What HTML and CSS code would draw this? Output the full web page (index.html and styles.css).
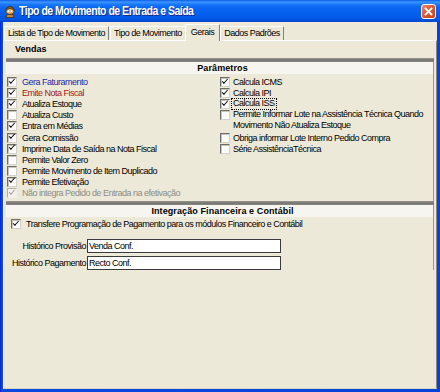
FILE: index.html
```html
<!DOCTYPE html>
<html>
<head>
<meta charset="utf-8">
<link rel="stylesheet" href="styles.css">
</head>
<body>
<div class="window">
  <div class="titlebar">
    <svg class="app-icon" width="12" height="13" viewBox="0 0 12 13">
      <path d="M2 4 Q6 -1.5 10 4 L10.5 5.5 L1.5 5.5 Z" fill="#8a5a1c" stroke="#3d2206" stroke-width="0.7"/>
      <ellipse cx="6" cy="6.5" rx="4" ry="3" fill="#e2b064" stroke="#3d2206" stroke-width="0.7"/>
      <circle cx="4.5" cy="6.2" r="0.9" fill="#fff"/>
      <circle cx="7.5" cy="6.2" r="0.9" fill="#fff"/>
      <path d="M3 9.5 L9 9.5 L10 12.6 L2 12.6 Z" fill="#c48a3a" stroke="#3d2206" stroke-width="0.7"/>
    </svg>
    <span class="title">Tipo de Movimento de Entrada e Saída</span>
    <div class="close">
      <svg width="13" height="13" viewBox="0 0 13 13"><path d="M3.5 3.5 L9.5 9.5 M9.5 3.5 L3.5 9.5" stroke="#fff" stroke-width="1.8" stroke-linecap="square"/></svg>
    </div>
  </div>
  <div class="client">
    <div class="tabs">
      <div class="tab">Lista de Tipo de Movimento</div>
      <div class="tab">Tipo de Movimento</div>
      <div class="tab active">Gerais</div>
      <div class="tab">Dados Padrões</div>
    </div>
    <div class="page">
      <div class="vendas">Vendas</div>

      <section class="group">
        <div class="bar"></div>
        <div class="group-head">Parâmetros</div>
        <div class="cols">
          <div class="col">
            <div class="row"><span class="cb on"></span><span class="lbl blue">Gera Faturamento</span></div>
            <div class="row"><span class="cb on"></span><span class="lbl red">Emite Nota Fiscal</span></div>
            <div class="row"><span class="cb on"></span><span class="lbl">Atualiza Estoque</span></div>
            <div class="row"><span class="cb"></span><span class="lbl">Atualiza Custo</span></div>
            <div class="row"><span class="cb on"></span><span class="lbl">Entra em Médias</span></div>
            <div class="row"><span class="cb on"></span><span class="lbl">Gera Comissão</span></div>
            <div class="row"><span class="cb on"></span><span class="lbl">Imprime Data de Saída na Nota Fiscal</span></div>
            <div class="row"><span class="cb"></span><span class="lbl">Permite Valor Zero</span></div>
            <div class="row"><span class="cb"></span><span class="lbl">Permite Movimento de Item Duplicado</span></div>
            <div class="row"><span class="cb on"></span><span class="lbl">Permite Efetivação</span></div>
            <div class="row disabled"><span class="cb on"></span><span class="lbl">Não integra Pedido de Entrada na efetivação</span></div>
          </div>
          <div class="col right">
            <div class="row"><span class="cb on"></span><span class="lbl">Calcula ICMS</span></div>
            <div class="row"><span class="cb on"></span><span class="lbl">Calcula IPI</span></div>
            <div class="row"><span class="cb on"></span><span class="lbl focus">Calcula ISS</span></div>
            <div class="row tall"><span class="cb"></span><span class="lbl">Permite Informar Lote na Assistência Técnica Quando<br>Movimento Não Atualiza Estoque</span></div>
            <div class="row"><span class="cb"></span><span class="lbl">Obriga informar Lote Interno Pedido Compra</span></div>
            <div class="row"><span class="cb"></span><span class="lbl">Série AssistênciaTécnica</span></div>
          </div>
        </div>
      </section>

      <section class="group integ">
        <div class="bar"></div>
        <div class="group-head">Integração Financeira e Contábil</div>
        <div class="row transfer"><span class="cb on"></span><span class="lbl">Transfere Programação de Pagamento para os módulos Financeiro e Contábil</span></div>
        <div class="form">
          <label class="flabel">Histórico Provisão</label>
          <div class="input">Venda Conf.</div>
          <label class="flabel">Histórico Pagamento</label>
          <div class="input">Recto Conf.</div>
        </div>
      </section>
    </div>
  </div>
</div>
</body>
</html>
```

FILE: styles.css
```css
* { box-sizing: border-box; }

html, body {
  margin: 0;
  padding: 0;
  background: #ffffff;
}

body {
  font-family: "Liberation Sans", Arial, sans-serif;
  font-size: 9px;
  letter-spacing: -0.5px;
  color: #000;
}

.window {
  width: 440px;
  height: 392px;
  display: flex;
  flex-direction: column;
  background: linear-gradient(to right, #0019cf 0, #0842d6 1px, #0a4ae2 3px, #0842d6 100%);
  overflow: hidden;
}

.titlebar {
  height: 22px;
  flex: none;
  display: flex;
  align-items: center;
  padding: 0 4px 0 4px;
  background: linear-gradient(to bottom, #0a5ae8 0%, #3d95ff 9%, #1a79fa 20%, #0a66f2 35%, #0460ee 60%, #0257e4 85%, #0047cf 100%);
}

.app-icon {
  flex: none;
  margin-top: 1px;
}

.title {
  margin-left: 3px;
  font-weight: bold;
  font-size: 12px;
  letter-spacing: -0.6px;
  color: #ffffff;
  text-shadow: 1px 1px 0 #0a2a8a;
  flex: 1;
  white-space: nowrap;
  transform: scaleX(0.88);
  transform-origin: left center;
}

.close {
  width: 15px;
  height: 15px;
  margin-top: 1px;
  border: 1px solid #ffffff;
  border-radius: 3px;
  background: linear-gradient(135deg, #ee8b67 0%, #dc5a34 45%, #c7411c 100%);
  display: flex;
  align-items: center;
  justify-content: center;
  flex: none;
}

.client {
  flex: 1;
  margin: 0 3px 3px 3px;
  background: #ece9d8;
  display: flex;
  flex-direction: column;
}

.tabs {
  height: 18px;
  flex: none;
  display: flex;
  align-items: flex-end;
  padding-left: 1px;
  position: relative;
  z-index: 1;
}

.tab {
  height: 14px;
  line-height: 12px;
  padding: 0 3px;
  border: 1px solid #ffffff;
  border-right-color: #808080;
  border-bottom: none;
  border-radius: 1px 1px 0 0;
  background: #ece9d8;
  white-space: nowrap;
}

.tab + .tab {
  margin-left: 1px;
}

.tab.active {
  height: 17px;
  margin: 0 -1px -1px -1px;
  padding: 1px 5px 0 5px;
  line-height: 12px;
  position: relative;
  z-index: 2;
}

.page {
  flex: 1;
  border-top: 1px solid #ffffff;
  border-left: 1px solid #ffffff;
  border-right: 1px solid #8a887e;
  border-bottom: 1px solid #d8d5c6;
  display: flex;
  flex-direction: column;
}

.vendas {
  height: 17px;
  line-height: 17px;
  padding-left: 11px;
  font-weight: bold;
  font-size: 9px;
  letter-spacing: 0;
}

.group {
  margin: 0 2px;
  border-right: 1px solid #9a988c;
}

.bar {
  height: 4px;
  background: linear-gradient(to bottom, #a7a59b 0, #7e7d78 1px, #7a7a76 3px, #8e8d86 4px);
  margin-right: -1px;
}

.group-head {
  height: 12px;
  line-height: 12px;
  text-align: center;
  font-weight: bold;
  font-size: 9px;
  letter-spacing: 0.1px;
  background: #f6f5f0;
  padding-left: 6px;
}

.cols {
  display: grid;
  grid-template-columns: 213px 1fr;
  padding: 2.5px 0 2.4px 1px;
}

.row {
  height: 11.1px;
  display: flex;
  align-items: center;
  white-space: nowrap;
}

.row.tall {
  height: 22.2px;
  align-items: flex-start;
}

.row.tall .cb {
  margin-top: 0.5px;
}

.row.tall .lbl {
  line-height: 11.1px;
  margin-top: -0.5px;
}

.cb {
  width: 10px;
  height: 10px;
  flex: none;
  position: relative;
  background: #ffffff;
  border: 1px solid #6e6d68;
  border-right-color: #d4d0c8;
  border-bottom-color: #d4d0c8;
  box-shadow: inset 1px 1px 0 #c8c6bc;
  margin-right: 5px;
}

.col.right .cb {
  margin-right: 3px;
}

.cb.on::after {
  content: "";
  position: absolute;
  left: 1.3px;
  top: 0.6px;
  width: 5px;
  height: 2.4px;
  border-left: 1.8px solid #000;
  border-bottom: 1.8px solid #000;
  transform: rotate(-48deg);
}

.blue { color: #1d1fa8; }
.red { color: #a3191a; }

.disabled .lbl { color: #8d8c86; }
.disabled .cb {
  background: #f2f1ea;
  border-color: #b0aea4 #f0efe8 #f0efe8 #b0aea4;
  box-shadow: none;
}
.disabled .cb.on::after {
  border-color: #a09e96;
}

.focus {
  display: inline-block;
  height: 11.5px;
  line-height: 9.5px;
  padding: 0 1px;
  margin-left: -2px;
  border: 1px dotted #000;
}

.transfer {
  margin-top: 2px;
  padding-left: 5px;
}

.form {
  display: grid;
  grid-template-columns: 81px 194px;
  grid-auto-rows: 14px;
  row-gap: 3px;
  margin-top: 9px;
  align-items: center;
}

.flabel {
  display: flex;
  justify-content: flex-end;
  padding-right: 1px;
  white-space: nowrap;
}

.input {
  height: 14px;
  line-height: 12px;
  background: #ffffff;
  border: 1px solid #3a3a3a;
  padding-left: 1px;
}
```
